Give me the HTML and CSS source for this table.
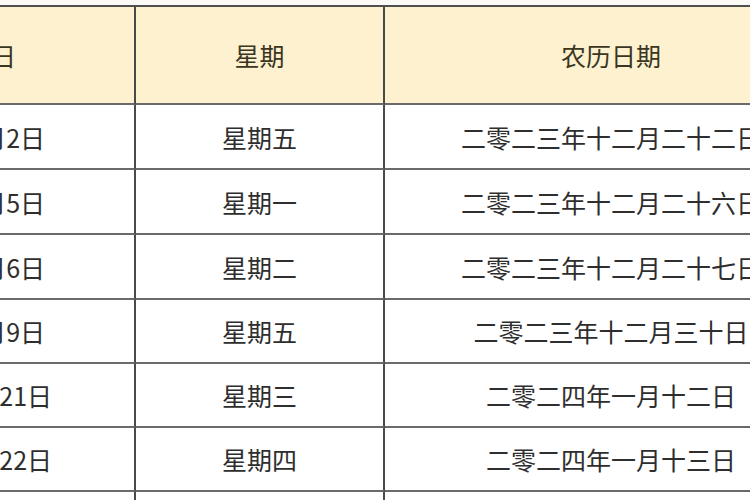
FILE: index.html
```html
<!DOCTYPE html>
<html lang="zh-CN">
<head>
<meta charset="utf-8">
<title>2024年2月结婚吉日</title>
<link rel="stylesheet" href="styles.css">
</head>
<body>
<div class="viewport">
  <div class="table">
    <div class="cell head">结婚吉日</div>
    <div class="cell head">星期</div>
    <div class="cell head">农历日期</div>

    <div class="cell">2024年2月2日</div>
    <div class="cell">星期五</div>
    <div class="cell">二零二三年十二月二十二日</div>

    <div class="cell">2024年2月5日</div>
    <div class="cell">星期一</div>
    <div class="cell">二零二三年十二月二十六日</div>

    <div class="cell">2024年2月6日</div>
    <div class="cell">星期二</div>
    <div class="cell">二零二三年十二月二十七日</div>

    <div class="cell">2024年2月9日</div>
    <div class="cell">星期五</div>
    <div class="cell">二零二三年十二月三十日</div>

    <div class="cell">2024年2月21日</div>
    <div class="cell">星期三</div>
    <div class="cell">二零二四年一月十二日</div>

    <div class="cell">2024年2月22日</div>
    <div class="cell">星期四</div>
    <div class="cell">二零二四年一月十三日</div>

    <div class="cell">2024年2月24日</div>
    <div class="cell">星期六</div>
    <div class="cell">二零二四年一月十五日</div>
  </div>
</div>
</body>
</html>
```

FILE: styles.css
```css
html, body {
  margin: 0;
  padding: 0;
  background: #fbfaf6;
  overflow: hidden;
}

.viewport {
  width: 750px;
  height: 500px;
  overflow: hidden;
}

.table {
  display: grid;
  grid-template-columns: 338px 249px 454px;
  grid-template-rows: 98px 65px 65px 65px 64px 64px 64px 65px;
  margin-top: 5px;
  margin-left: -204px;
  width: max-content;
  border-top: 2px solid #4f4f4f;
  border-left: 2px solid #4f4f4f;
  font-family: "Noto Sans CJK SC", "Noto Sans", sans-serif;
  font-size: 25px;
  color: #2e2e2e;
}

.cell {
  box-sizing: border-box;
  display: flex;
  align-items: center;
  justify-content: center;
  white-space: nowrap;
  background: #ffffff;
  border-right: 2px solid #4a4a4a;
  border-bottom: 2px solid #6a6a6a;
}

.head {
  background: #fdf1d0;
  color: #3b3621;
}
```
